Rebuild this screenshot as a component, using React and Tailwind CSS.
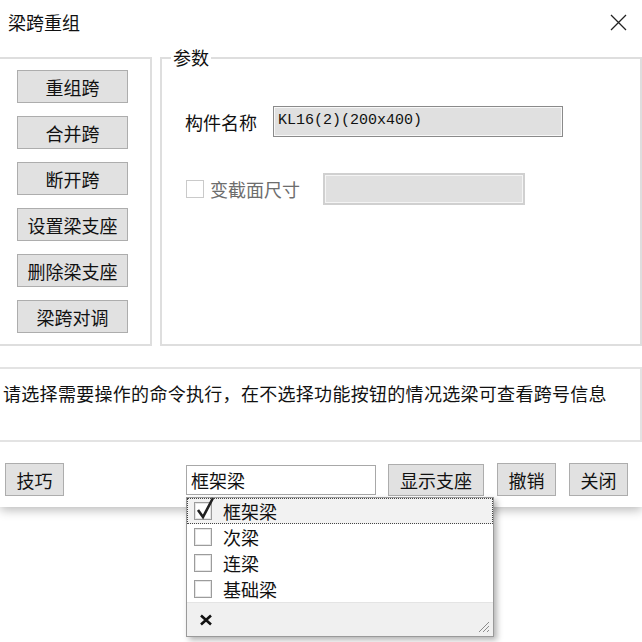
import React from "react";

const cjk = { fontFamily: '"Noto Sans CJK SC", "Microsoft YaHei", sans-serif' };

const leftButtons = ["重组跨", "合并跨", "断开跨", "设置梁支座", "删除梁支座", "梁跨对调"];

const beamTypes = [
  { name: "框架梁", checked: true },
  { name: "次梁", checked: false },
  { name: "连梁", checked: false },
  { name: "基础梁", checked: false },
];

const WinButton = ({ children, className = "" }) => (
  <div
    className={`flex items-center justify-center bg-[#e1e1e1] border border-[#adadad] text-[18px] leading-none text-[#111] ${className}`}
  >
    {children}
  </div>
);

const CheckBox = ({ checked }) => (
  <div className="relative w-[18px] h-[18px] border border-[#9c9c9c] bg-white shadow-[inset_0_0_0_1px_#e6e6e6] shrink-0">
    {checked && (
      <svg
        className="absolute left-[1px] top-[-7px]"
        width="20"
        height="24"
        viewBox="0 0 20 24"
        fill="none"
      >
        <path d="M2 14 L7 21 L17 2" stroke="#222" strokeWidth="2.6" strokeLinejoin="miter" />
      </svg>
    )}
  </div>
);

const App = () => {
  return (
    <div className="relative w-[642px] h-[642px] bg-white overflow-hidden text-[#111]" style={cjk}>
      {/* dialog */}
      <div className="h-[507px] bg-white shadow-[0_3px_10px_rgba(0,0,0,0.28)]">
        <div className="h-[57px] flex justify-between">
          <div className="pl-[8px] pt-[9px] text-[18px] leading-[26px]">梁跨重组</div>
          <svg className="mt-[14px] mr-[15px]" width="17" height="17" viewBox="0 0 17 17">
            <path d="M1 1 L16 16 M16 1 L1 16" stroke="#222" strokeWidth="1.3" />
          </svg>
        </div>

        <div className="flex h-[289px]">
          <div className="w-[152px] h-full border-2 border-l-0 border-[#dedede] pl-[17px] pt-[11px] flex flex-col gap-[13px]">
            {leftButtons.map((b) => (
              <WinButton key={b} className="w-[111px] h-[33px]">
                {b}
              </WinButton>
            ))}
          </div>

          <div className="relative ml-[8px] flex-1 h-full border-2 border-[#dedede] pl-[23px] pt-[47px]">
            <span className="absolute left-[9px] top-[-15px] px-[2px] bg-white text-[18px] leading-[26px]">
              参数
            </span>
            <div className="flex items-center">
              <span className="text-[18px] leading-none w-[88px]">构件名称</span>
              <div className="w-[290px] h-[31px] border border-[#8a8a8a] bg-[#e0e0e0] shadow-[inset_0_0_0_1px_#f8f8f8] flex items-center pl-[4px]">
                <span className="text-[15px] text-[#111]" style={{ fontFamily: '"Liberation Mono", monospace' }}>
                  KL16(2)(200x400)
                </span>
              </div>
            </div>
            <div className="flex items-center mt-[36px]">
              <div className="w-[18px] h-[18px] ml-[1px] border border-[#cacaca] bg-white" />
              <span className="ml-[6px] text-[18px] leading-none text-[#6d6d6d] w-[113px]">变截面尺寸</span>
              <div className="w-[202px] h-[32px] border-2 border-[#d0d0d0] bg-[#e0e0e0] shadow-[inset_0_0_0_1px_#f4f4f4]" />
            </div>
          </div>
        </div>

        <div className="mt-[21px] h-[75px] border-2 border-l-0 border-[#e3e3e3] pl-[3px] pt-[11px]">
          <p className="text-[18px] leading-[26px] tracking-[0.3px]">
            请选择需要操作的命令执行，在不选择功能按钮的情况选梁可查看跨号信息
          </p>
        </div>

        <div className="mt-[21px] flex items-center h-[33px]">
          <WinButton className="ml-[5px] w-[59px] h-[33px]">技巧</WinButton>
          <div className="ml-[122px] w-[190px] h-[30px] border border-[#a8a8a8] bg-white flex items-center pl-[4px] text-[18px] leading-none">
            框架梁
          </div>
          <WinButton className="ml-[12px] w-[96px] h-[32px]">显示支座</WinButton>
          <WinButton className="ml-[13px] w-[59px] h-[33px]">撤销</WinButton>
          <WinButton className="ml-[13px] w-[59px] h-[33px]">关闭</WinButton>
        </div>
      </div>

      {/* dropdown list */}
      <div className="absolute left-[186px] top-[497px] w-[308px] h-[140px] bg-white border border-[#9a9a9a] shadow-[3px_3px_6px_rgba(0,0,0,0.3)] flex flex-col">
        <div className="flex-1 flex flex-col">
          {beamTypes.map((t, i) => (
            <div
              key={t.name}
              className={`h-[26px] flex items-center pl-[6px] ${
                i === 0 ? "bg-[#f2f2f2] border border-dotted border-[#444]" : "border border-transparent"
              }`}
            >
              <CheckBox checked={t.checked} />
              <span className="ml-[11px] text-[18px] leading-none">{t.name}</span>
            </div>
          ))}
        </div>
        <div className="h-[34px] bg-[#f0f0f0] border-t border-[#e4e4e4] relative flex items-center pl-[12px]">
          <svg width="14" height="12" viewBox="0 0 14 12">
            <path d="M2 1.5 L12 10.5 M12 1.5 L2 10.5" stroke="#111" strokeWidth="2.6" />
          </svg>
          <svg className="absolute right-[3px] bottom-[3px]" width="14" height="14" viewBox="0 0 14 14">
            <path d="M13 3 L3 13 M13 7 L7 13 M13 11 L11 13" stroke="#8c8c8c" strokeWidth="1" />
          </svg>
        </div>
      </div>
    </div>
  );
};

export default App;
